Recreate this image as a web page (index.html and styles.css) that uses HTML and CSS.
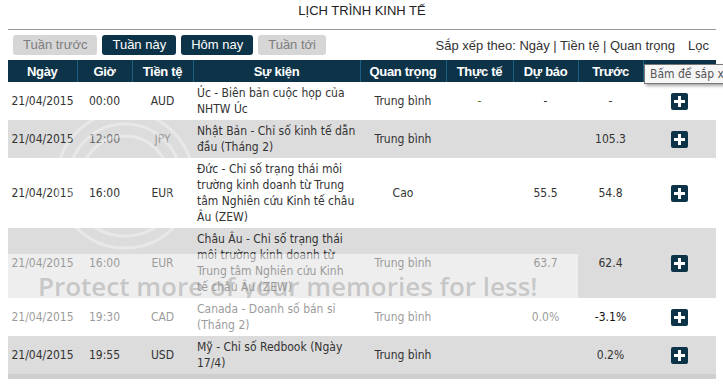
FILE: index.html
```html
<!DOCTYPE html>
<html lang="vi">
<head>
<meta charset="utf-8">
<title>Lịch trình kinh tế</title>
<link rel="stylesheet" href="styles.css">
</head>
<body>
<div class="page">
  <h1 class="title">LỊCH TRÌNH KINH TẾ</h1>
  <div class="toolbar">
    <div class="tabs">
      <span class="btn btn-off">Tuần trước</span>
      <span class="btn btn-on">Tuần này</span>
      <span class="btn btn-on">Hôm nay</span>
      <span class="btn btn-off">Tuần tới</span>
    </div>
    <div class="sort">
      <span>Sắp xếp theo: Ngày | Tiền tệ | Quan trọng</span>
      <span class="filter">Lọc</span>
    </div>
  </div>
  <table class="cal">
    <colgroup>
      <col class="c-date"><col class="c-time"><col class="c-cur"><col class="c-event"><col class="c-imp"><col class="c-act-num"><col class="c-num"><col class="c-num"><col class="c-act">
    </colgroup>
    <thead>
      <tr>
        <th>Ngày</th><th>Giờ</th><th>Tiền tệ</th><th>Sự kiện</th><th>Quan trọng</th><th>Thực tế</th><th>Dự báo</th><th>Trước</th><th></th>
      </tr>
    </thead>
    <tbody>
      <tr>
        <td>21/04/2015</td><td>00:00</td><td>AUD</td>
        <td class="ev"><span>Úc - Biên bản cuộc họp của</span><span>NHTW Úc</span></td>
        <td>Trung bình</td><td class="act-val">-</td><td>-</td><td>-</td>
        <td><span class="plus"><svg viewBox="0 0 17 17" width="17" height="17"><path d="M7 3h3v4h4v3h-4v4H7v-4H3V7h4z" fill="#fff"/></svg></span></td>
      </tr>
      <tr class="alt">
        <td>21/04/2015</td><td class="faint">12:00</td><td class="faint2">JPY</td>
        <td class="ev"><span>Nhật Bản - Chỉ số kinh tế dẫn</span><span>đầu (Tháng 2)</span></td>
        <td>Trung bình</td><td></td><td></td><td>105.3</td>
        <td><span class="plus"><svg viewBox="0 0 17 17" width="17" height="17"><path d="M7 3h3v4h4v3h-4v4H7v-4H3V7h4z" fill="#fff"/></svg></span></td>
      </tr>
      <tr>
        <td>21/04/2015</td><td>16:00</td><td>EUR</td>
        <td class="ev"><span>Đức - Chỉ số trạng thái môi</span><span>trường kinh doanh từ Trung</span><span>tâm Nghiên cứu Kinh tế châu</span><span>Âu (ZEW)</span></td>
        <td>Cao</td><td></td><td>55.5</td><td>54.8</td>
        <td><span class="plus"><svg viewBox="0 0 17 17" width="17" height="17"><path d="M7 3h3v4h4v3h-4v4H7v-4H3V7h4z" fill="#fff"/></svg></span></td>
      </tr>
      <tr class="alt">
        <td>21/04/2015</td><td>16:00</td><td>EUR</td>
        <td class="ev"><span>Châu Âu - Chỉ số trạng thái</span><span>môi trường kinh doanh từ</span><span>Trung tâm Nghiên cứu Kinh</span><span>tế châu Âu (ZEW)</span></td>
        <td>Trung bình</td><td></td><td>63.7</td><td>62.4</td>
        <td><span class="plus"><svg viewBox="0 0 17 17" width="17" height="17"><path d="M7 3h3v4h4v3h-4v4H7v-4H3V7h4z" fill="#fff"/></svg></span></td>
      </tr>
      <tr>
        <td>21/04/2015</td><td>19:30</td><td>CAD</td>
        <td class="ev"><span>Canada - Doanh số bán sỉ</span><span>(Tháng 2)</span></td>
        <td>Trung bình</td><td></td><td>0.0%</td><td class="dark">-3.1%</td>
        <td><span class="plus"><svg viewBox="0 0 17 17" width="17" height="17"><path d="M7 3h3v4h4v3h-4v4H7v-4H3V7h4z" fill="#fff"/></svg></span></td>
      </tr>
      <tr class="alt">
        <td>21/04/2015</td><td>19:55</td><td>USD</td>
        <td class="ev"><span>Mỹ - Chỉ số Redbook (Ngày</span><span>17/4)</span></td>
        <td>Trung bình</td><td></td><td></td><td>0.2%</td>
        <td><span class="plus"><svg viewBox="0 0 17 17" width="17" height="17"><path d="M7 3h3v4h4v3h-4v4H7v-4H3V7h4z" fill="#fff"/></svg></span></td>
      </tr>
    </tbody>
  </table>
  <div class="table-foot"></div>
</div>

<svg class="logo-mark" width="200" height="160" viewBox="0 0 200 160">
  <circle cx="100" cy="80" r="44" fill="none" stroke="#fff" stroke-width="3"/>
  <circle cx="100" cy="80" r="56" fill="none" stroke="#fff" stroke-width="3"/>
  <circle cx="100" cy="80" r="68" fill="none" stroke="#fff" stroke-width="3"/>
</svg>

<div class="watermark">
  <div class="wm-text">Protect more of your memories for less!</div>
</div>

<div class="tooltip">Bấm để sắp xếp theo cột</div>
</body>
</html>
```

FILE: styles.css
```css
html {
  overflow: hidden;
}
body {
  margin: 0;
  background: #fff;
  font-family: "Liberation Sans", Arial, sans-serif;
  color: #333;
}
.page {
  padding: 0 7px 0 8px;
  width: 708px;
}
.title {
  margin: 0;
  padding: 3px 0 11px;
  font-size: 13px;
  line-height: 15px;
  font-weight: normal;
  text-align: center;
  color: #222;
  border-bottom: 1px solid #9a9a9a;
}
.toolbar {
  display: flex;
  justify-content: space-between;
  align-items: center;
  margin-top: 5px;
  padding: 0 7px 0 5px;
  height: 20px;
}
.tabs {
  display: flex;
  gap: 5px;
}
.btn {
  display: block;
  height: 20px;
  line-height: 20px;
  padding: 0 10px;
  font-size: 13px;
  border-radius: 3px;
}
.btn-off {
  background: #d6d6d6;
  color: #7d7d7d;
}
.btn-on {
  background: #0d3349;
  color: #fff;
}
.sort {
  display: flex;
  gap: 13px;
  font-size: 13px;
  color: #333;
}
.cal {
  margin-top: 5px;
  width: 708px;
  border-collapse: collapse;
  table-layout: fixed;
  font-family: "DejaVu Sans Condensed", "DejaVu Sans", sans-serif;
  font-stretch: condensed;
  font-size: 12px;
  color: #333;
}
.c-date { width: 69px; }
.c-time { width: 55px; }
.c-cur { width: 61px; }
.c-event { width: 167px; }
.c-imp { width: 86px; }
.c-act-num { width: 67px; }
.c-num { width: 65px; }
.c-act { width: 73px; }
.cal thead th {
  background: #0d3349;
  color: #fff;
  height: 22px;
  padding: 0;
  font-family: "Liberation Sans", Arial, sans-serif;
  font-stretch: normal;
  font-size: 13px;
  letter-spacing: -0.3px;
  font-weight: bold;
  text-align: center;
  border-left: 1px solid #1d5f84;
}
.cal thead th:first-child {
  border-left: none;
}
.cal td {
  padding: 3px 0;
  line-height: 16px;
  text-align: center;
  vertical-align: middle;
  white-space: nowrap;
}
.cal td.ev {
  text-align: left;
  padding-left: 4px;
}
.cal td.ev span {
  display: block;
}
.cal tr.alt td {
  background: #dcdcdc;
}
.faint { color: #6a6a6a; }
.faint2 { color: #9a9a9a; }
.dark { color: #111; }
.act-val { color: #4f7a2c; }
.plus {
  display: inline-block;
  width: 17px;
  height: 17px;
  background: #0d3349;
  border-radius: 2px;
  vertical-align: middle;
}
.plus svg {
  display: block;
}
.table-foot {
  height: 5px;
  background: #cfcfcf;
}
.logo-mark {
  position: absolute;
  left: 25px;
  top: 100px;
  opacity: 0.35;
  pointer-events: none;
}
.watermark {
  position: absolute;
  left: 0;
  top: 254px;
  width: 578px;
  height: 82px;
  background: rgba(255, 255, 255, 0.5);
  pointer-events: none;
}
.wm-text {
  height: 44px;
  overflow: hidden;
  padding-top: 19px;
  box-sizing: border-box;
  padding-left: 38px;
  font-family: "Open Sans", sans-serif;
  font-weight: 600;
  font-size: 26px;
  line-height: 26px;
  color: rgba(150, 150, 150, 0.45);
  white-space: nowrap;
}
.tooltip {
  position: absolute;
  left: 644px;
  top: 64px;
  width: 90px;
  height: 20px;
  box-sizing: border-box;
  padding: 0 5px;
  background: #f6f6f6;
  border: 1px solid #777;
  box-shadow: 2px 2px 3px rgba(0, 0, 0, 0.35);
  font-family: "DejaVu Sans Condensed", "DejaVu Sans", sans-serif;
  font-size: 12px;
  line-height: 18px;
  color: #555;
  white-space: nowrap;
  overflow: hidden;
}
```
